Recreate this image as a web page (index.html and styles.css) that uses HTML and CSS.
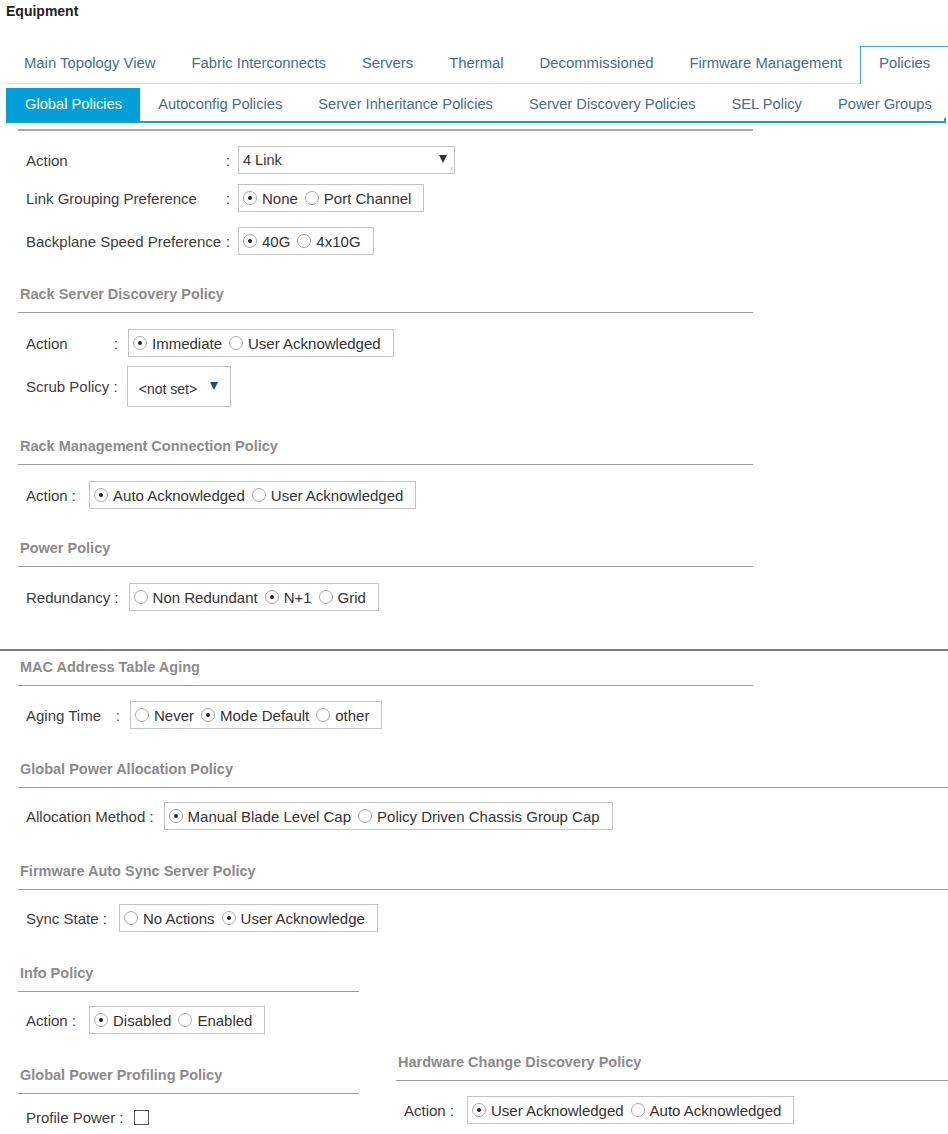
FILE: index.html
```html
<!DOCTYPE html>
<html>
<head>
<meta charset="utf-8">
<link rel="stylesheet" href="styles.css">
</head>
<body>
<div class="title">Equipment</div>
<div class="tabs">
  <div class="tab">Main Topology View</div>
  <div class="tab">Fabric Interconnects</div>
  <div class="tab">Servers</div>
  <div class="tab">Thermal</div>
  <div class="tab">Decommissioned</div>
  <div class="tab">Firmware Management</div>
  <div class="tab active">Policies</div>
</div>
<div class="subtabs">
  <div class="stab active">Global Policies</div>
  <div class="stab">Autoconfig Policies</div>
  <div class="stab">Server Inheritance Policies</div>
  <div class="stab">Server Discovery Policies</div>
  <div class="stab">SEL Policy</div>
  <div class="stab">Power Groups</div>
</div>

<div class="panel">
  <div class="topline"></div>

  <div class="row mt15">
    <div class="lbl w204"><span>Action</span><span>:</span></div>
    <div class="select wide"><span>4 Link</span><span class="arrow"></span><span class="grip"></span></div>
  </div>
  <div class="row mt10">
    <div class="lbl w204"><span>Link Grouping Preference</span><span>:</span></div>
    <div class="rg">
      <div class="opt"><span class="radio on"></span>None</div>
      <div class="opt"><span class="radio"></span>Port Channel</div>
    </div>
  </div>
  <div class="row mt15">
    <div class="lbl w204"><span>Backplane Speed Preference</span><span>:</span></div>
    <div class="rg">
      <div class="opt"><span class="radio on"></span>40G</div>
      <div class="opt"><span class="radio"></span>4x10G</div>
    </div>
  </div>

  <div class="head mt29">Rack Server Discovery Policy</div>
  <div class="row mt16">
    <div class="lbl w92"><span>Action</span><span>:</span></div>
    <div class="rg">
      <div class="opt"><span class="radio on"></span>Immediate</div>
      <div class="opt"><span class="radio"></span>User Acknowledged</div>
    </div>
  </div>
  <div class="row tall mt9">
    <div class="lbl g9">Scrub Policy :</div>
    <div class="select scrub"><span>&lt;not set&gt;</span><span class="arrow blue"></span></div>
  </div>

  <div class="head mt29">Rack Management Connection Policy</div>
  <div class="row mt16">
    <div class="lbl g13">Action :</div>
    <div class="rg">
      <div class="opt"><span class="radio on"></span>Auto Acknowledged</div>
      <div class="opt"><span class="radio"></span>User Acknowledged</div>
    </div>
  </div>

  <div class="head mt29">Power Policy</div>
  <div class="row mt16">
    <div class="lbl g10">Redundancy :</div>
    <div class="rg">
      <div class="opt"><span class="radio"></span>Non Redundant</div>
      <div class="opt"><span class="radio on"></span>N+1</div>
      <div class="opt"><span class="radio"></span>Grid</div>
    </div>
  </div>

  <div class="thick"></div>

  <div class="head mt6">MAC Address Table Aging</div>
  <div class="row mt15">
    <div class="lbl w94"><span>Aging Time</span><span>:</span></div>
    <div class="rg">
      <div class="opt"><span class="radio"></span>Never</div>
      <div class="opt"><span class="radio on"></span>Mode Default</div>
      <div class="opt"><span class="radio"></span>other</div>
    </div>
  </div>

  <div class="head full mt30">Global Power Allocation Policy</div>
  <div class="row mt14">
    <div class="lbl g10">Allocation Method :</div>
    <div class="rg">
      <div class="opt"><span class="radio on"></span>Manual Blade Level Cap</div>
      <div class="opt"><span class="radio"></span>Policy Driven Chassis Group Cap</div>
    </div>
  </div>

  <div class="head full mt31">Firmware Auto Sync Server Policy</div>
  <div class="row mt14">
    <div class="lbl g12">Sync State :</div>
    <div class="rg">
      <div class="opt"><span class="radio"></span>No Actions</div>
      <div class="opt"><span class="radio on"></span>User Acknowledge</div>
    </div>
  </div>

  <div class="cols mt31">
    <div class="col-left">
      <div class="head">Info Policy</div>
      <div class="row mt14">
        <div class="lbl g13">Action :</div>
        <div class="rg">
          <div class="opt"><span class="radio on"></span>Disabled</div>
          <div class="opt"><span class="radio"></span>Enabled</div>
        </div>
      </div>
      <div class="head mt31">Global Power Profiling Policy</div>
      <div class="row mt9">
        <div class="lbl g10">Profile Power :</div>
        <span class="check"></span>
      </div>
    </div>
    <div class="col-right">
      <div class="head">Hardware Change Discovery Policy</div>
      <div class="row mt15">
        <div class="lbl g13">Action :</div>
        <div class="rg">
          <div class="opt"><span class="radio on"></span>User Acknowledged</div>
          <div class="opt"><span class="radio"></span>Auto Acknowledged</div>
        </div>
      </div>
    </div>
  </div>
</div>
</body>
</html>
```

FILE: styles.css
```css
* { box-sizing: border-box; }
html, body { margin: 0; padding: 0; background: #fff; }
body {
  font-family: "Liberation Sans", Arial, Helvetica, sans-serif;
  font-size: 15px;
  color: #3a3a3a;
  width: 948px;
  overflow: hidden;
}

.title {
  font-weight: bold;
  font-size: 14px;
  color: #222;
  line-height: 22px;
  padding-left: 6px;
}

/* top tabs */
.tabs {
  margin: 24px 0 0 6px;
  height: 38px;
  display: flex;
  align-items: flex-end;
  border-bottom: 1px solid #dcdcdc;
  white-space: nowrap;
  font-size: 14.85px;
}
.tab {
  flex: none;
  color: #4a6d86;
  padding: 0 17px 4px;
  line-height: 33px;
  height: 37px;
  border: 1px solid transparent;
  border-bottom: none;
}
.tab.active {
  margin-left: auto;
  margin-right: 2px;
  padding: 0 18px 4px;
  border-color: #3ea3d3;
  background: #fff;
  margin-bottom: -1px;
  height: 38px;
}

/* sub tabs */
.subtabs {
  margin: 4px 2px 0 6px;
  display: flex;
  border-bottom: 2px solid #1a9fd5;
  height: 35px;
  position: relative;
  white-space: nowrap;
  font-size: 14.7px;
}
.subtabs::after {
  content: "";
  position: absolute;
  right: 0;
  bottom: -2px;
  width: 2px;
  height: 5px;
  background: #1a9fd5;
}
.stab {
  flex: none;
  color: #4a6d86;
  padding: 0 18px;
  line-height: 33px;
}
.stab.active {
  background: #049fd9;
  color: #fff;
  padding: 0 18px 0 19px;
}

/* panel */
.panel { padding-left: 18px; }
.topline {
  margin-top: 6px;
  width: 735px;
  border-top: 2px solid #a9a9a9;
}
.thick {
  margin-left: -18px;
  margin-top: 38px;
  width: 948px;
  border-top: 2px solid #7d7d7d;
}

.head {
  width: 735px;
  font-weight: bold;
  font-size: 14.5px;
  color: #8b8b8b;
  line-height: 20px;
  padding: 0 0 8px 2px;
  border-bottom: 1px solid #9c9c9c;
}
.head.full { width: 930px; }

.row {
  display: flex;
  align-items: center;
  height: 28px;
  padding-left: 8px;
}
.row.tall { height: 41px; }

.lbl { display: flex; justify-content: space-between; white-space: nowrap; color: #3c3c3c; }
.w204 { width: 204px; margin-right: 8px; }
.w92 { width: 92px; margin-right: 10px; }
.w94 { width: 94px; margin-right: 10px; }
.g9 { margin-right: 9px; }
.g10 { margin-right: 10px; }
.g12 { margin-right: 12px; }
.g13 { margin-right: 13px; }

.mt6 { margin-top: 6px; }
.mt9 { margin-top: 9px; }
.mt10 { margin-top: 10px; }
.mt14 { margin-top: 14px; }
.mt15 { margin-top: 15px; }
.mt16 { margin-top: 16px; }
.mt29 { margin-top: 29px; }
.mt30 { margin-top: 30px; }
.mt31 { margin-top: 31px; }

/* radio group */
.rg {
  display: flex;
  align-items: center;
  height: 28px;
  border: 1px solid #c4c4c4;
  padding: 0 12px 0 4px;
  color: #333;
  white-space: nowrap;
}
.opt { display: flex; align-items: center; margin-right: 7px; }
.opt:last-child { margin-right: 0; }
.radio {
  position: relative;
  width: 14px;
  height: 14px;
  border: 1px solid #a8a8a8;
  border-radius: 50%;
  margin-right: 5px;
  background: #fff;
  flex: none;
}
.radio.on::after {
  content: "";
  position: absolute;
  left: 4px;
  top: 4px;
  width: 4px;
  height: 4px;
  border-radius: 50%;
  background: #222;
}

/* selects */
.select {
  position: relative;
  display: flex;
  align-items: center;
  border: 1px solid #c4c4c4;
  color: #333;
}
.select.wide {
  width: 217px;
  height: 28px;
  padding-left: 4px;
  font-size: 14.5px;
}
.select.wide .arrow {
  position: absolute;
  right: 7px;
  top: 8px;
}
.arrow {
  width: 0;
  height: 0;
  border-left: 4.5px solid transparent;
  border-right: 4.5px solid transparent;
  border-top: 8px solid #333;
}
.grip {
  position: absolute;
  right: 2px;
  bottom: 2px;
  width: 4px;
  height: 4px;
  border-right: 1px solid #bbb;
  border-bottom: 1px solid #fff;
  transform: skewX(-30deg);
}
.select.scrub {
  width: 104px;
  height: 41px;
  padding: 5px 0 0 11px;
  font-size: 14px;
}
.select.scrub .arrow {
  position: absolute;
  left: 82px;
  top: 15px;
}
.arrow.blue { border-top-color: #1b4d72; }

.check {
  width: 15px;
  height: 15px;
  border: 1px solid #555;
  background: #fff;
}

/* bottom columns */
.cols { display: flex; align-items: flex-start; }
.col-left { width: 341px; }
.col-left .head { width: 341px; }
.col-right { margin-left: 37px; margin-top: 89px; width: 552px; }
.col-right .head { width: 552px; }
```
